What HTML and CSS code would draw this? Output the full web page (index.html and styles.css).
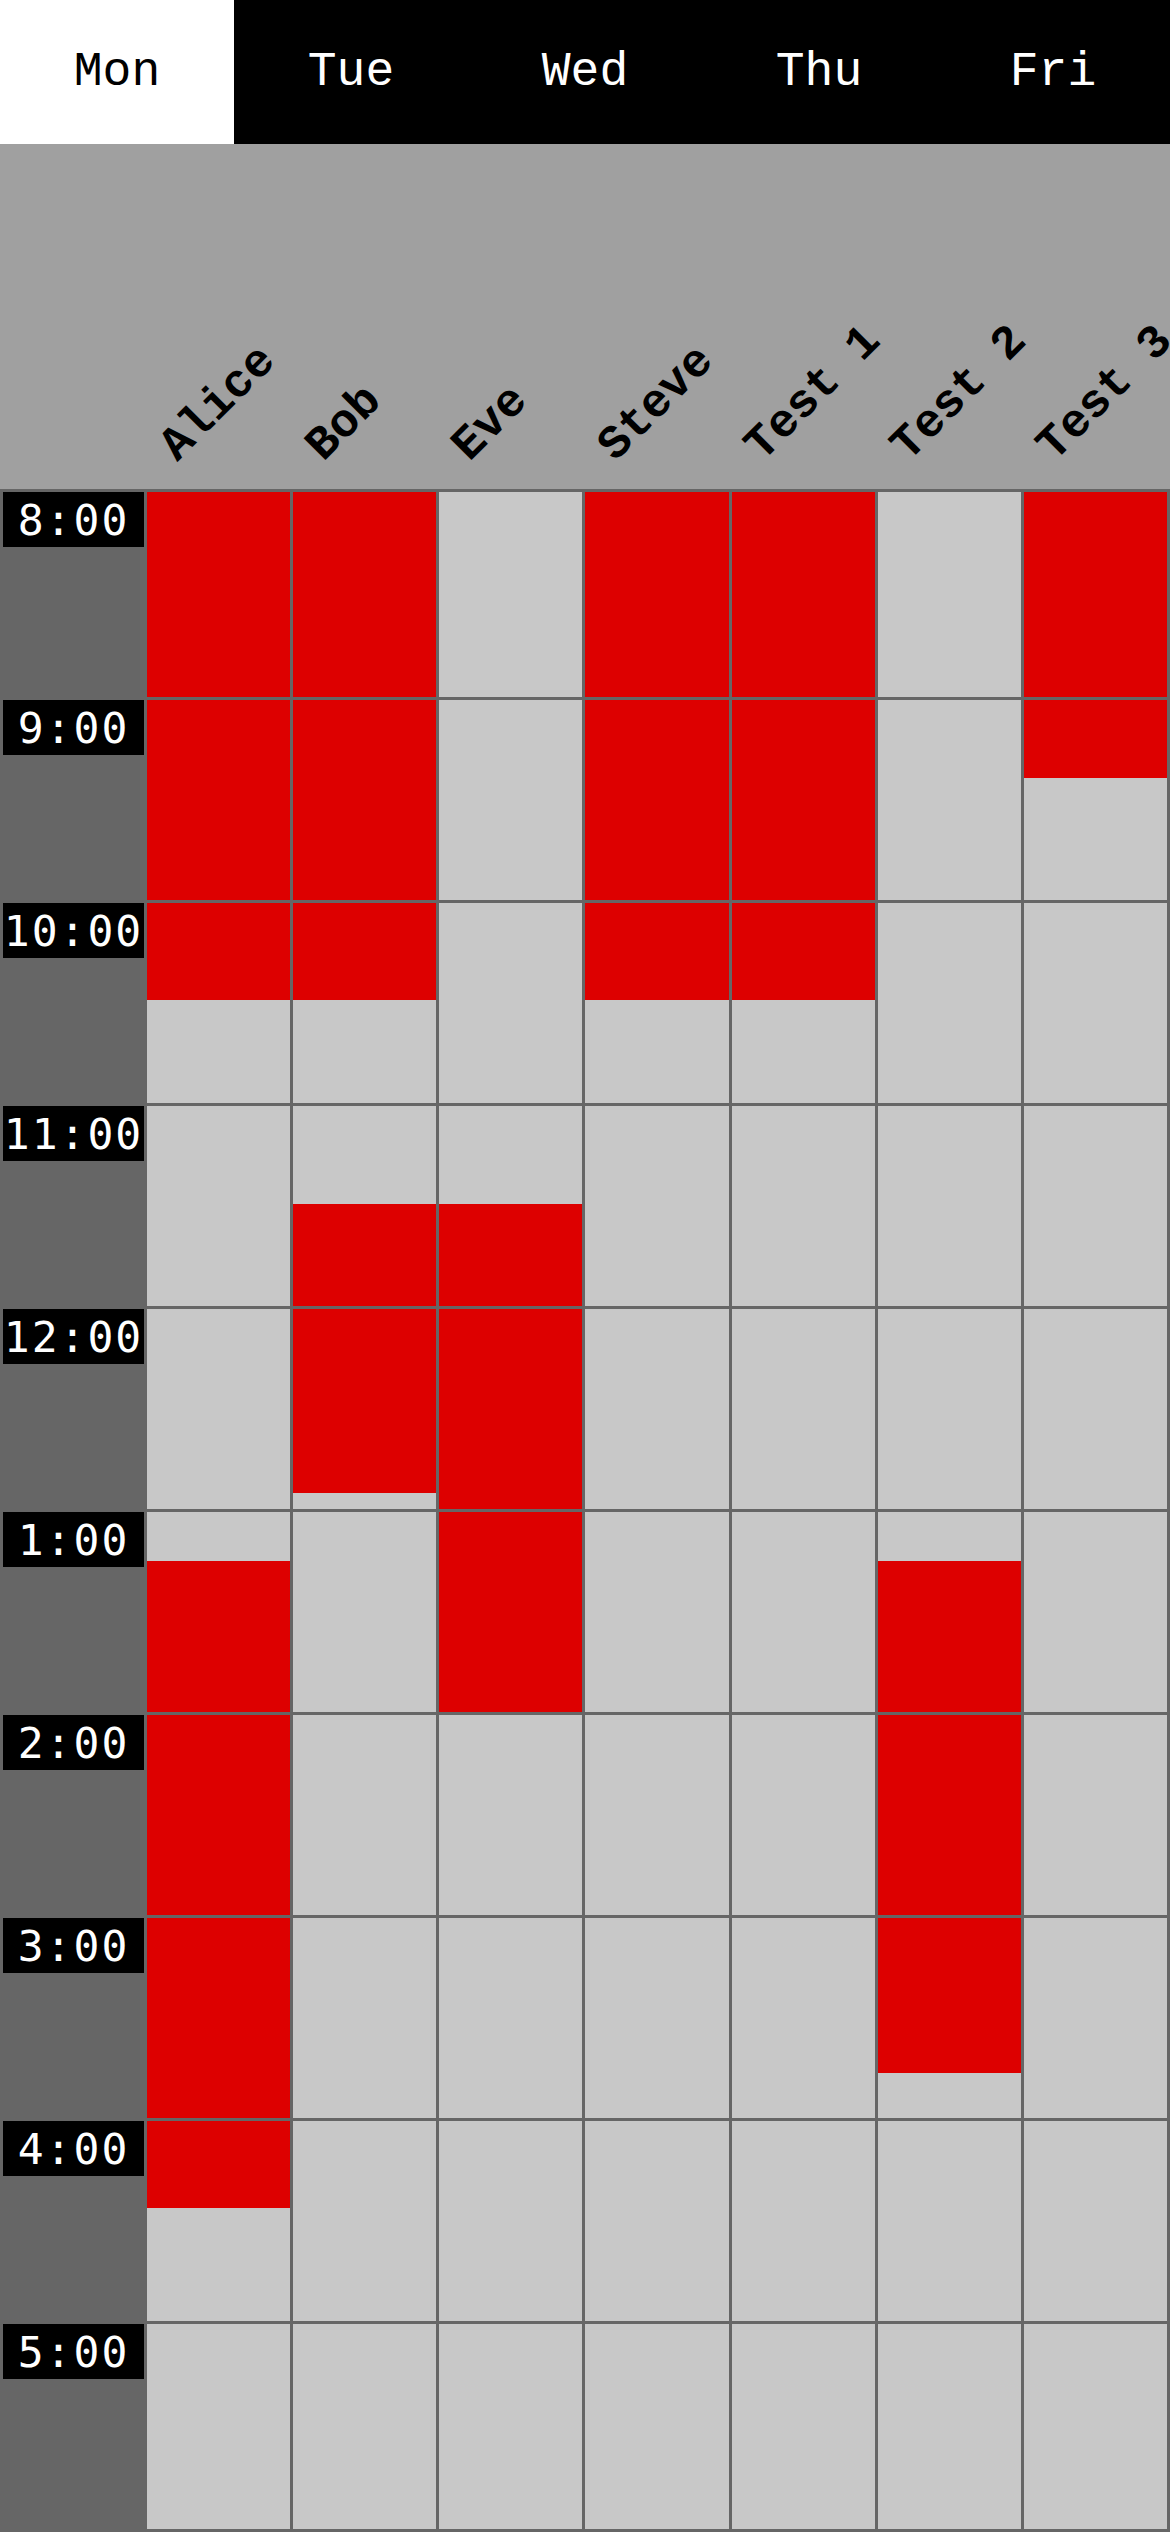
FILE: index.html
```html
<!DOCTYPE html>
<html lang="en">
<head>
    <meta charset="UTF-8">
    <meta name="viewport" content="width=device-width, initial-scale=1.0">
    <title>Schedule</title>
    <link rel="stylesheet" href="styles.css">
</head>
<body>

<nav class="days">
    <div class="day active">Mon</div>
    <div class="day">Tue</div>
    <div class="day">Wed</div>
    <div class="day">Thu</div>
    <div class="day">Fri</div>
</nav>

<div class="names" id="names">
    <div class="corner"></div>
    <!-- Names are added here by JavaScript -->
</div>

<div class="schedule" id="schedule">
    <!-- Hours and cells are added here by JavaScript -->
</div>

<script>
    const people = ['Alice', 'Bob', 'Eve', 'Steve', 'Test 1', 'Test 2', 'Test 3'];
    const hours = ['8:00', '9:00', '10:00', '11:00', '12:00', '1:00', '2:00', '3:00', '4:00', '5:00'];

    // Busy times in minutes after 8:00, [start, end]
    const busy = {
        'Alice': [[0, 149], [314.7, 506.1]],
        'Bob': [[0, 149], [209.3, 295.3]],
        'Eve': [[209.3, 360]],
        'Steve': [[0, 149]],
        'Test 1': [[0, 149]],
        'Test 2': [[314.7, 466.4]],
        'Test 3': [[0, 83.4]]
    };

    const names = document.getElementById('names');
    people.forEach(person => {
        const cell = document.createElement('div');
        cell.className = 'name';
        const label = document.createElement('span');
        label.textContent = person;
        cell.appendChild(label);
        names.appendChild(cell);
    });

    const schedule = document.getElementById('schedule');
    hours.forEach((hour, h) => {
        const time = document.createElement('div');
        time.className = 'time';
        const label = document.createElement('span');
        label.textContent = hour;
        time.appendChild(label);
        schedule.appendChild(time);

        const from = h * 60;
        const to = from + 60;

        people.forEach(person => {
            const cell = document.createElement('div');
            cell.className = 'cell';
            let cursor = 0;
            busy[person].forEach(([start, end]) => {
                const s = Math.max(start, from);
                const e = Math.min(end, to);
                if (e <= s) return;
                const top = (s - from) / 60 * 100;
                const len = (e - s) / 60 * 100;
                if (top > cursor) {
                    const free = document.createElement('div');
                    free.style.height = (top - cursor) + '%';
                    cell.appendChild(free);
                }
                const block = document.createElement('div');
                block.className = 'busy';
                block.style.height = len + '%';
                cell.appendChild(block);
                cursor = top + len;
            });
            schedule.appendChild(cell);
        });
    });
</script>

</body>
</html>
```

FILE: styles.css
```css
body {
    margin: 0;
    background-color: #a0a0a0;
    font-family: "Liberation Mono", "Courier New", monospace;
}
.days {
    display: flex;
    height: 144px;
    background-color: #000;
}
.day {
    flex: 1;
    display: flex;
    align-items: center;
    justify-content: center;
    color: #fff;
    font-size: 48px;
}
.day.active {
    background-color: #fff;
    color: #000;
}
.names {
    display: grid;
    grid-template-columns: 141px repeat(7, minmax(0, 1fr));
    column-gap: 3px;
    padding: 0 3px;
    height: 345px;
    overflow: hidden;
    background-color: #a0a0a0;
}
.name {
    display: flex;
    align-items: flex-end;
    min-width: 0;
    padding: 0 0 19px 38px;
}
.name span {
    font-size: 47px;
    font-weight: bold;
    line-height: 1;
    white-space: nowrap;
    color: #000;
    transform: rotate(-45deg);
    transform-origin: left bottom;
}
.schedule {
    display: grid;
    grid-template-columns: 141px repeat(7, minmax(0, 1fr));
    grid-template-rows: 205px repeat(8, 200px) 205px;
    gap: 3px;
    padding: 3px;
    background-color: #666;
}
.time {
    background-color: #666;
}
.time span {
    display: block;
    height: 55px;
    line-height: 57px;
    background-color: #000;
    color: #fff;
    text-align: center;
    font-family: "DejaVu Sans Mono", monospace;
    font-size: 43px;
    letter-spacing: 2px;
}
.cell {
    background-color: #c8c8c8;
}
.busy {
    background-color: #d00;
}
```
